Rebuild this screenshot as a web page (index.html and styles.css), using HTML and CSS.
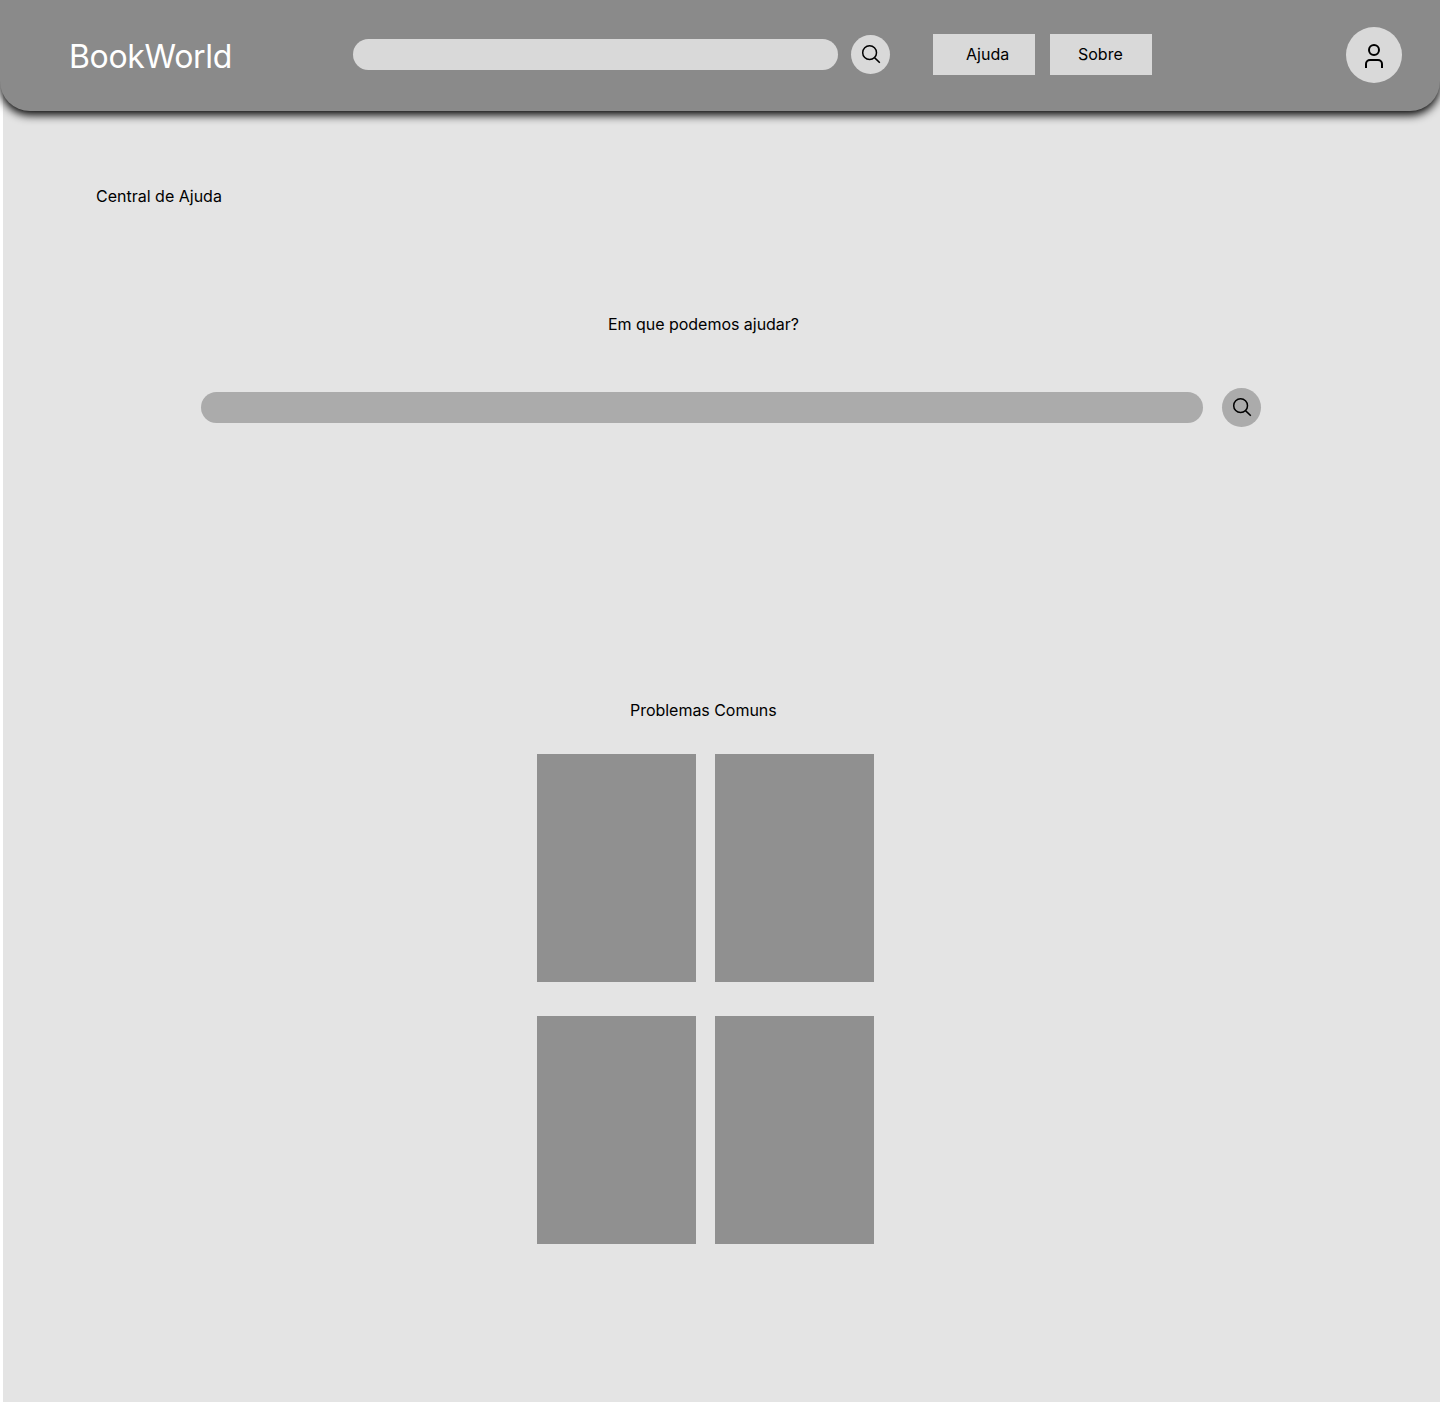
FILE: index.html
```html
<!DOCTYPE html>
<html lang="pt-BR">
<head>
<meta charset="utf-8">
<title>BookWorld - Central de Ajuda</title>
<link rel="stylesheet" href="styles.css">
</head>
<body>
<header class="topbar">
  <div class="brand">BookWorld</div>
  <div class="search-field"></div>
  <div class="search-button">
    <svg width="39" height="39" viewBox="0 0 39 39"><circle cx="18.6" cy="17.7" r="6.9"/><path d="M23.5 22.6L28.8 27.7"/></svg>
  </div>
  <nav class="menu">
    <a class="menu-item menu-help">Ajuda</a>
    <a class="menu-item menu-about">Sobre</a>
  </nav>
  <div class="avatar">
    <svg width="56" height="56" viewBox="0 0 56 56"><circle cx="28" cy="23" r="5"/><path d="M20 41V37A4 4 0 0 1 24 33H32A4 4 0 0 1 36 37V41"/></svg>
  </div>
</header>
<main class="page">
  <h1 class="title">Central de Ajuda</h1>
  <h2 class="question">Em que podemos ajudar?</h2>
  <div class="help-search">
    <div class="help-field"></div>
    <div class="search-button help-button">
      <svg width="39" height="39" viewBox="0 0 39 39"><circle cx="18.6" cy="17.7" r="6.9"/><path d="M23.5 22.6L28.8 27.7"/></svg>
    </div>
  </div>
  <h2 class="problems-title">Problemas Comuns</h2>
  <section class="problems">
    <div class="card"></div>
    <div class="card"></div>
    <div class="card"></div>
    <div class="card"></div>
  </section>
</main>
</body>
</html>
```
FILE: styles.css
```css
* { box-sizing: border-box; }
body {
  margin: 0;
  background: #fff;
  color: #000;
  font: 400 16px/20px Inter, sans-serif;
}
.topbar {
  position: relative;
  display: flex;
  align-items: center;
  width: 1440px;
  height: 111px;
  padding: 0 38px 2px 70px;
  background: #8a8a8a;
  border-radius: 0 0 30px 30px;
  box-shadow: 0 4px 10px #000;
}
.brand {
  width: 284px;
  margin-left: -1px;
  padding-top: 5px;
  color: #fff;
  font-size: 32px;
  line-height: 40px;
  letter-spacing: -.32px;
}
.search-field {
  width: 485px;
  height: 31px;
  margin-right: 13px;
  background: #d9d9d9;
  border-radius: 16px;
}
.search-button {
  width: 39px;
  height: 39px;
  background: #d9d9d9;
  border-radius: 50%;
}
svg {
  display: block;
  fill: none;
  stroke: #000;
  stroke-width: 1.5;
}
.menu {
  display: flex;
  gap: 15px;
  margin-left: 43px;
}
.menu-item {
  width: 102px;
  height: 41px;
  line-height: 41px;
  background: #d9d9d9;
}
.menu-help { padding-left: 33px; }
.menu-about { padding-left: 28px; }
.avatar {
  width: 56px;
  height: 56px;
  margin-top: 1px;
  margin-left: auto;
  background: #d9d9d9;
  border-radius: 50%;
}
.avatar svg { stroke-width: 2; }
.page {
  width: 1437px;
  height: 1321px;
  margin: -30px 0 0 3px;
  padding-top: 105px;
  background: #e4e4e4;
}
h1, h2 {
  margin: 0;
  font-size: 16px;
  font-weight: 400;
  line-height: 20px;
}
.title { padding-left: 93px; }
.question { margin-top: 108px; padding-left: 605px; letter-spacing: -.03px; }
.help-search {
  display: flex;
  align-items: center;
  gap: 19px;
  margin: 54px 0 0 198px;
}
.help-field {
  width: 1002px;
  height: 31px;
  background: #ababab;
  border-radius: 16px;
}
.help-button { background: #ababab; }
.problems-title { margin-top: 273px; padding-left: 627px; letter-spacing: -.03px; }
.problems {
  display: grid;
  grid-template-columns: 159px 159px;
  grid-auto-rows: 228px;
  gap: 34px 19px;
  margin: 34px 0 0 534px;
}
.card { background: #909090; }
```
